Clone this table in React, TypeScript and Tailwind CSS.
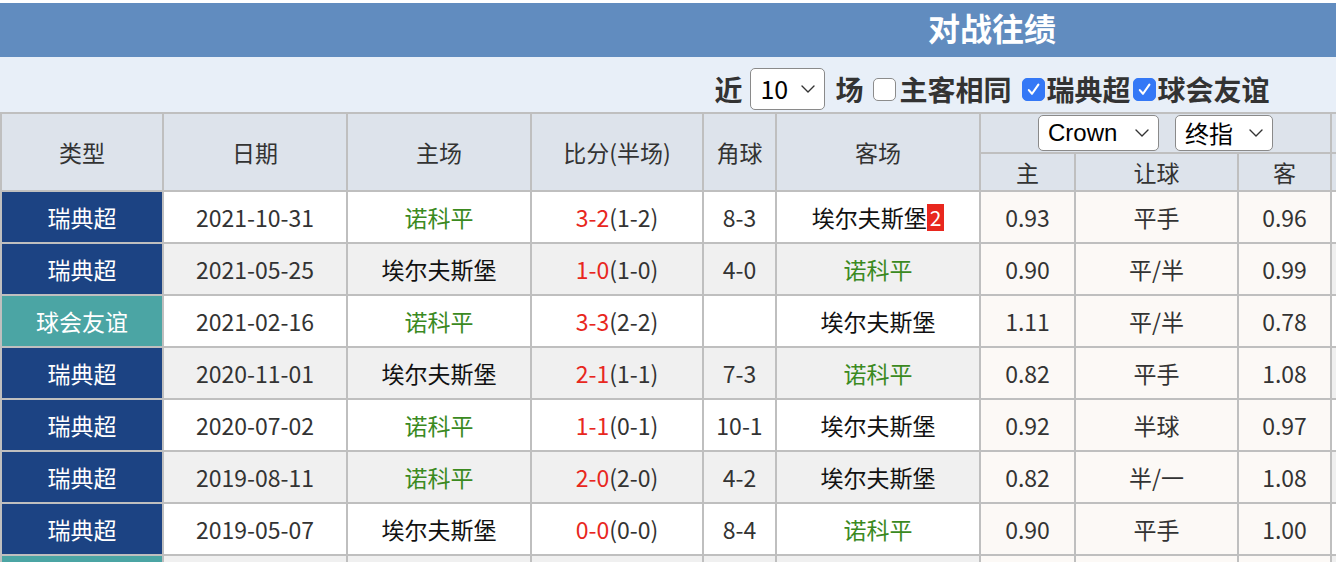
import { FC } from "react";

type Match = {
  type: string;
  friendly?: boolean;
  date: string;
  home: string;
  score: string;
  half: string;
  corner: string;
  away: string;
  badge?: string;
  h: string;
  line: string;
  a: string;
};

const GREEN_TEAM = "诺科平";

const matches: Match[] = [
  { type: "瑞典超", date: "2021-10-31", home: "诺科平", score: "3-2", half: "(1-2)", corner: "8-3", away: "埃尔夫斯堡", badge: "2", h: "0.93", line: "平手", a: "0.96" },
  { type: "瑞典超", date: "2021-05-25", home: "埃尔夫斯堡", score: "1-0", half: "(1-0)", corner: "4-0", away: "诺科平", h: "0.90", line: "平/半", a: "0.99" },
  { type: "球会友谊", friendly: true, date: "2021-02-16", home: "诺科平", score: "3-3", half: "(2-2)", corner: "", away: "埃尔夫斯堡", h: "1.11", line: "平/半", a: "0.78" },
  { type: "瑞典超", date: "2020-11-01", home: "埃尔夫斯堡", score: "2-1", half: "(1-1)", corner: "7-3", away: "诺科平", h: "0.82", line: "平手", a: "1.08" },
  { type: "瑞典超", date: "2020-07-02", home: "诺科平", score: "1-1", half: "(0-1)", corner: "10-1", away: "埃尔夫斯堡", h: "0.92", line: "半球", a: "0.97" },
  { type: "瑞典超", date: "2019-08-11", home: "诺科平", score: "2-0", half: "(2-0)", corner: "4-2", away: "埃尔夫斯堡", h: "0.82", line: "半/一", a: "1.08" },
  { type: "瑞典超", date: "2019-05-07", home: "埃尔夫斯堡", score: "0-0", half: "(0-0)", corner: "8-4", away: "诺科平", h: "0.90", line: "平手", a: "1.00" },
];

const CheckBox: FC<{ checked?: boolean }> = ({ checked }) => (
  <span
    className={`flex h-[23px] w-[23px] items-center justify-center rounded-[5px] border ${
      checked ? "border-[#3478f6] bg-[#3478f6]" : "border-[#8c8c8c] bg-white"
    }`}
  >
    {checked && (
      <svg viewBox="0 0 16 16" className="h-[17px] w-[17px]">
        <path d="M3.6 8.6 6.6 12 12.6 3.4" fill="none" stroke="white" strokeWidth="2" strokeLinecap="round" strokeLinejoin="round" />
      </svg>
    )}
  </span>
);

// thin wide "∨" like the native select arrow
const Caret: FC = () => (
  <svg viewBox="0 0 14 8" className="h-[8px] w-[14px]">
    <path d="M1 1 7 7 13 1" fill="none" stroke="#333" strokeWidth="1.4" strokeLinecap="round" strokeLinejoin="round" />
  </svg>
);

const FakeSelect: FC<{ value: string; className: string; text: string }> = ({ value, className, text }) => (
  <span className={`flex items-center justify-between rounded-[5px] border border-[#8a8a8a] bg-white pl-[9px] pr-[9px] font-normal text-black ${className}`}>
    <span className={text}>{value}</span>
    <Caret />
  </span>
);

const teamColor = (name: string) => (name === GREEN_TEAM ? "text-[#3b8a1f]" : "text-[#111]");

const App: FC = () => {
  return (
    <div className="h-screen w-screen overflow-hidden bg-white font-[family-name:'Noto_Sans_CJK_SC','Noto_Sans',sans-serif]">
      <div className="mt-[3px] w-[1984px]">
        <div className="flex h-[54px] items-center justify-center bg-[#618cbf] pb-[7px] text-[32px] font-bold text-white">
          对战往绩
        </div>
        <div className="flex h-[55px] items-center justify-center bg-[#e8eff8] pt-[9px] text-[28px] font-bold text-[#333]">
          <span>近</span>
          <FakeSelect value="10" className="ml-[8px] h-[42px] w-[75px]" text="text-[25px]" />
          <span className="ml-[10px]">场</span>
          <span className="ml-[10px]">
            <CheckBox />
          </span>
          <span className="ml-[3px]">主客相同</span>
          <span className="ml-[10px]">
            <CheckBox checked />
          </span>
          <span className="ml-[2px]">瑞典超</span>
          <span className="ml-[2px]">
            <CheckBox checked />
          </span>
          <span className="ml-[2px]">球会友谊</span>
        </div>

        <div className="grid w-max auto-rows-[50px] grid-cols-[160px_182px_182px_170px_71px_202px_93px_161px_91px_93px_161px_91px] grid-rows-[38px_36px] gap-[2px] bg-[#bfbfbf] p-[2px] text-[23px] text-[#333]">
          {["类型", "日期", "主场", "比分(半场)", "角球", "客场"].map((h) => (
            <div key={h} className="row-span-2 flex items-center justify-center bg-[#dde3eb]">
              {h}
            </div>
          ))}
          <div className="col-span-3 flex items-center justify-center gap-[16px] bg-[#dde3eb]">
            <FakeSelect value="Crown" className="h-[36px] w-[121px]" text="text-[24px] font-[family-name:'Liberation_Sans',sans-serif]" />
            <FakeSelect value="终指" className="h-[36px] w-[98px]" text="text-[24px]" />
          </div>
          <div className="col-span-3 bg-[#dde3eb]" />
          {["主", "让球", "客"].map((h) => (
            <div key={h} className="flex items-center justify-center bg-[#dde3eb]">
              {h}
            </div>
          ))}
          <div className="bg-[#dde3eb]" />
          <div className="bg-[#dde3eb]" />
          <div className="bg-[#dde3eb]" />

          {matches.map((m, i) => {
            const rowBg = i % 2 === 0 ? "bg-white" : "bg-[#f0f0f0]";
            const cell = `flex items-center justify-center ${rowBg}`;
            const odds = "flex items-center justify-center bg-[#fcf9f6]";
            return [
              <div key={`t${i}`} className={`flex items-center justify-center text-white ${m.friendly ? "bg-[#4ba5a4]" : "bg-[#1c4383]"}`}>
                {m.type}
              </div>,
              <div key={`d${i}`} className={cell}>{m.date}</div>,
              <div key={`h${i}`} className={`${cell} ${teamColor(m.home)}`}>{m.home}</div>,
              <div key={`s${i}`} className={cell}>
                <span className="text-[#e8271e]">{m.score}</span>
                <span>{m.half}</span>
              </div>,
              <div key={`c${i}`} className={cell}>{m.corner}</div>,
              <div key={`a${i}`} className={`${cell} ${teamColor(m.away)}`}>
                {m.away}
                {m.badge && (
                  <span className="flex h-[27px] items-center bg-[#e8271e] px-[3px] text-[21px] leading-none text-white">
                    {m.badge}
                  </span>
                )}
              </div>,
              <div key={`oh${i}`} className={odds}>{m.h}</div>,
              <div key={`ol${i}`} className={odds}>{m.line}</div>,
              <div key={`oa${i}`} className={odds}>{m.a}</div>,
              <div key={`x1${i}`} className={rowBg} />,
              <div key={`x2${i}`} className={rowBg} />,
              <div key={`x3${i}`} className={rowBg} />,
            ];
          })}
          {/* next row, only its top edge is in view */}
          <div className="bg-[#4ba5a4]" />
          {Array.from({ length: 5 }).map((_, k) => (
            <div key={`n${k}`} className="bg-[#f0f0f0]" />
          ))}
          <div className="bg-[#fcf9f6]" />
          <div className="bg-[#fcf9f6]" />
          <div className="bg-[#fcf9f6]" />
          <div className="bg-[#f0f0f0]" />
          <div className="bg-[#f0f0f0]" />
          <div className="bg-[#f0f0f0]" />
        </div>
      </div>
    </div>
  );
};

export default App;
